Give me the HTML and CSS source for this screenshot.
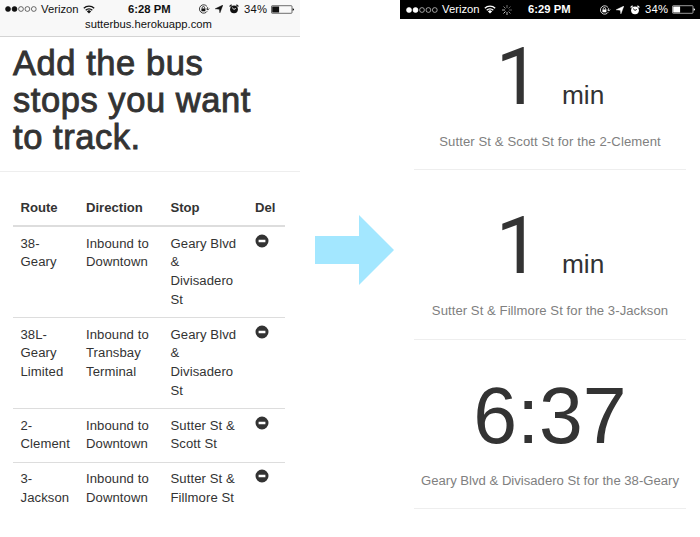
FILE: index.html
```html
<!DOCTYPE html>
<html lang="en">
<head>
<meta charset="utf-8">
<title>Sutter Bus</title>
<link rel="stylesheet" href="styles.css">
</head>
<body>
<svg class="defs" width="0" height="0" aria-hidden="true">
  <symbol id="signal" viewBox="0 0 32 6"><g stroke="currentColor" stroke-width=".6"><circle cx="3" cy="3" r="2.5" fill="currentColor"/><circle cx="9.5" cy="3" r="2.5" fill="currentColor"/><g fill="none"><circle cx="16" cy="3" r="2.4"/><circle cx="22.4" cy="3" r="2.4"/><circle cx="28.8" cy="3" r="2.4"/></g></g></symbol>
  <symbol id="wifi" viewBox="0 0 12 9"><g fill="none" stroke="currentColor" stroke-width="1.3"><path d="M.8 3.3a7.3 7.3 0 0 1 10.4 0"/><path d="M2.7 5.3a4.6 4.6 0 0 1 6.6 0"/></g><path d="M3.9 6.4a3 3 0 0 1 4.2 0L6 8.5z" fill="currentColor"/></symbol>
  <symbol id="lock" viewBox="0 0 12 10"><path d="M9.1 2.6A4.2 4.2 0 1 0 9.2 7.2M9.6 3.2v2.5M8.2 4.5l1.5 1.6 1.5-1.6" fill="none" stroke="currentColor" stroke-width=".8"/><path d="M3.4 4.5h4v2.8h-4z" fill="currentColor"/><path d="M4.2 4.6V3.7a1.2 1.2 0 0 1 2.4 0v.9" fill="none" stroke="currentColor" stroke-width=".8"/></symbol>
  <symbol id="locate" viewBox="0 0 8 8"><path d="M7.9.1 4.9 7.9 4.3 4.2.1 3.8z" fill="currentColor" stroke="currentColor" stroke-width=".4"/></symbol>
  <symbol id="alarm" viewBox="0 0 10 10"><circle cx="5" cy="5.3" r="3.9" fill="currentColor"/><path d="M.6 2.5 2.6.8M9.4 2.5 7.4.8" stroke="currentColor" stroke-width="1.2"/><path class="hands" d="M3.1 3.6 5 5.4l1.8-1" fill="none" stroke-width=".9"/></symbol>
  <symbol id="battery" viewBox="0 0 24 9"><rect x=".5" y=".7" width="20.5" height="7.6" rx=".8" fill="none" stroke="currentColor" stroke-width=".6"/><path d="M1.2 1.4h6.9v6.2H1.2zM21.6 3.2q1.5.2 1.5 1.3t-1.5 1.3z" fill="currentColor"/></symbol>
  <symbol id="minus" viewBox="0 0 14 14"><path fill-rule="evenodd" d="M7 .5a6.5 6.5 0 1 0 0 13 6.5 6.5 0 0 0 0-13zM3.6 5.7h6.8v2.6H3.6z" fill="currentColor"/></symbol>
</svg>
<main class="stage">
  <section class="phone">
    <header class="browser-bar">
      <div class="status">
        <svg class="signal"><use href="#signal"/></svg>
        <span class="carrier">Verizon</span>
        <svg class="wifi"><use href="#wifi"/></svg>
        <span class="time">6:28 PM</span>
        <svg class="lock"><use href="#lock"/></svg>
        <svg class="locate"><use href="#locate"/></svg>
        <svg class="alarm"><use href="#alarm"/></svg>
        <span class="percent">34%</span>
        <svg class="battery"><use href="#battery"/></svg>
      </div>
      <div class="url">sutterbus.herokuapp.com</div>
    </header>
    <h1>Add the bus<br>stops you want<br>to track.</h1>
    <table class="stops">
      <thead><tr><th class="c-route">Route</th><th class="c-wide">Direction</th><th class="c-wide">Stop</th><th class="c-del">Del</th></tr></thead>
      <tbody>
        <tr><td>38-<br>Geary</td><td>Inbound to<br>Downtown</td><td>Geary Blvd<br>&amp;<br>Divisadero<br>St</td><td><svg class="minus"><use href="#minus"/></svg></td></tr>
        <tr><td>38L-<br>Geary<br>Limited</td><td>Inbound to<br>Transbay<br>Terminal</td><td>Geary Blvd<br>&amp;<br>Divisadero<br>St</td><td><svg class="minus"><use href="#minus"/></svg></td></tr>
        <tr><td>2-<br>Clement</td><td>Inbound to<br>Downtown</td><td>Sutter St &amp;<br>Scott St</td><td><svg class="minus"><use href="#minus"/></svg></td></tr>
        <tr><td>3-<br>Jackson</td><td>Inbound to<br>Downtown</td><td>Sutter St &amp;<br>Fillmore St</td><td><svg class="minus"><use href="#minus"/></svg></td></tr>
      </tbody>
    </table>
  </section>
  <div class="between">
    <svg class="arrow" viewBox="0 0 79 70"><path d="M0 21h44V0l35 35-35 35V49H0z" fill="#a3e7ff"/></svg>
  </div>
  <section class="phone">
    <div class="status dark">
      <svg class="signal"><use href="#signal"/></svg>
      <span class="carrier">Verizon</span>
      <svg class="wifi"><use href="#wifi"/></svg>
      <svg class="spinner" viewBox="0 0 10 10"><g stroke="#fff" stroke-width=".9"><path d="M5 0v3" opacity=".5"/><path d="m8.5 1.5-2 2" opacity=".4"/><path d="M10 5H7" opacity=".4"/><path d="m8.5 8.5-2-2" opacity=".6"/><path d="M5 10V7" opacity=".8"/><path d="m1.5 8.5 2-2" opacity=".9"/><path d="M0 5h3" opacity=".75"/><path d="m1.5 1.5 2 2" opacity=".6"/></g></svg>
      <span class="time">6:29 PM</span>
      <svg class="lock"><use href="#lock"/></svg>
      <svg class="locate"><use href="#locate"/></svg>
      <svg class="alarm"><use href="#alarm"/></svg>
      <span class="percent">34%</span>
      <svg class="battery"><use href="#battery"/></svg>
    </div>
    <div class="arrivals">
      <article class="arrival"><div class="wait"><span class="minutes">1</span><span class="unit">min</span></div><p class="clement">Sutter St &amp; Scott St for the 2-Clement</p></article>
      <article class="arrival"><div class="wait"><span class="minutes">1</span><span class="unit">min</span></div><p class="jackson">Sutter St &amp; Fillmore St for the 3-Jackson</p></article>
      <article class="arrival"><div class="wait">6:37</div><p>Geary Blvd &amp; Divisadero St for the 38-Geary</p></article>
    </div>
  </section>
</main>
</body>
</html>
```
FILE: styles.css
```css
* { box-sizing: border-box; }
body { margin: 0; background: #fff; color: #333; font: 13.125px/18.75px "Liberation Sans", Arial, sans-serif; }
.defs { display: block; }
.stage { display: grid; grid-template-columns: 300px 100px 300px; height: 537px; overflow: hidden; }
.browser-bar { height: 37px; background: #f8f8f8; border-bottom: 1px solid #d4d4d4; color: #111; }
.status { --bar: #f8f8f8; display: flex; align-items: center; height: 18px; padding-left: 5px; font-size: 11.25px; white-space: nowrap; }
.status > * { flex: none; }
.signal { width: 32px; height: 6px; }
.carrier { width: 38px; margin-left: 4px; }
.wifi { width: 12px; height: 9px; margin-left: 4px; }
.time { width: 45px; margin-left: 33px; font-weight: 700; }
.lock { width: 12px; height: 10px; margin-left: 25px; }
.locate { width: 8px; height: 8px; margin-left: 5px; }
.alarm { width: 10px; height: 10px; margin-left: 6px; }
.hands { stroke: var(--bar); }
.percent { width: 24px; margin-left: 5px; letter-spacing: .3px; }
.battery { width: 24px; height: 9px; margin-left: 3px; }
.dark { --bar: #000; height: 19px; padding: 0 0 0 6px; background: #000; color: #fff; }
.spinner { width: 10px; height: 10px; margin-left: 6px; }
.spinner + .time { margin-left: 16px; }
.dark .time { margin-right: 1px; }
.url { height: 12px; text-align: center; font-size: 11.25px; line-height: 12px; padding-right: 3px; }
h1 { height: 135px; margin: 0; padding: 8px 0 0 13px; border-bottom: 1px solid #eee; font-size: 34.5px; line-height: 36.75px; font-weight: 400; letter-spacing: .55px; -webkit-text-stroke: .9px #333; }
.stops { width: 272px; margin: 19px 0 0 13px; border-collapse: separate; border-spacing: 0; table-layout: fixed; }
.c-route { width: 65.5px; }
.c-wide { width: 84.5px; }
.c-del { width: 37.5px; }
th { height: 36px; padding: 7.5px; text-align: left; border-bottom: 2px solid #ddd; white-space: nowrap; }
td { padding: 7.5px; vertical-align: top; border-bottom: 1px solid #ddd; white-space: nowrap; letter-spacing: .08px; }
tbody tr:last-child td { border-bottom: 0; }
.minus { display: block; width: 14px; height: 14px; margin-top: -1px; }
.between { padding: 215px 0 0 15px; }
.arrow { display: block; width: 79px; height: 70px; }
.arrivals { padding: 0 14px; }
.arrival { height: 169.5px; padding-top: 37px; border-bottom: 1px solid #eee; text-align: center; }
.arrival:first-child { height: 151px; padding-top: 18.5px; }
.wait { display: flex; justify-content: center; align-items: baseline; height: 79px; font-size: 78.75px; line-height: 79px; }
.minutes { font-family: Roboto, "Liberation Sans", sans-serif; }
.unit { margin-left: 22px; font-size: 26.25px; }
.arrival p { margin: 16px 0 0; color: #808080; white-space: nowrap; }
.arrival .clement { letter-spacing: .1px; }
.arrival .jackson { letter-spacing: .06px; }
```
